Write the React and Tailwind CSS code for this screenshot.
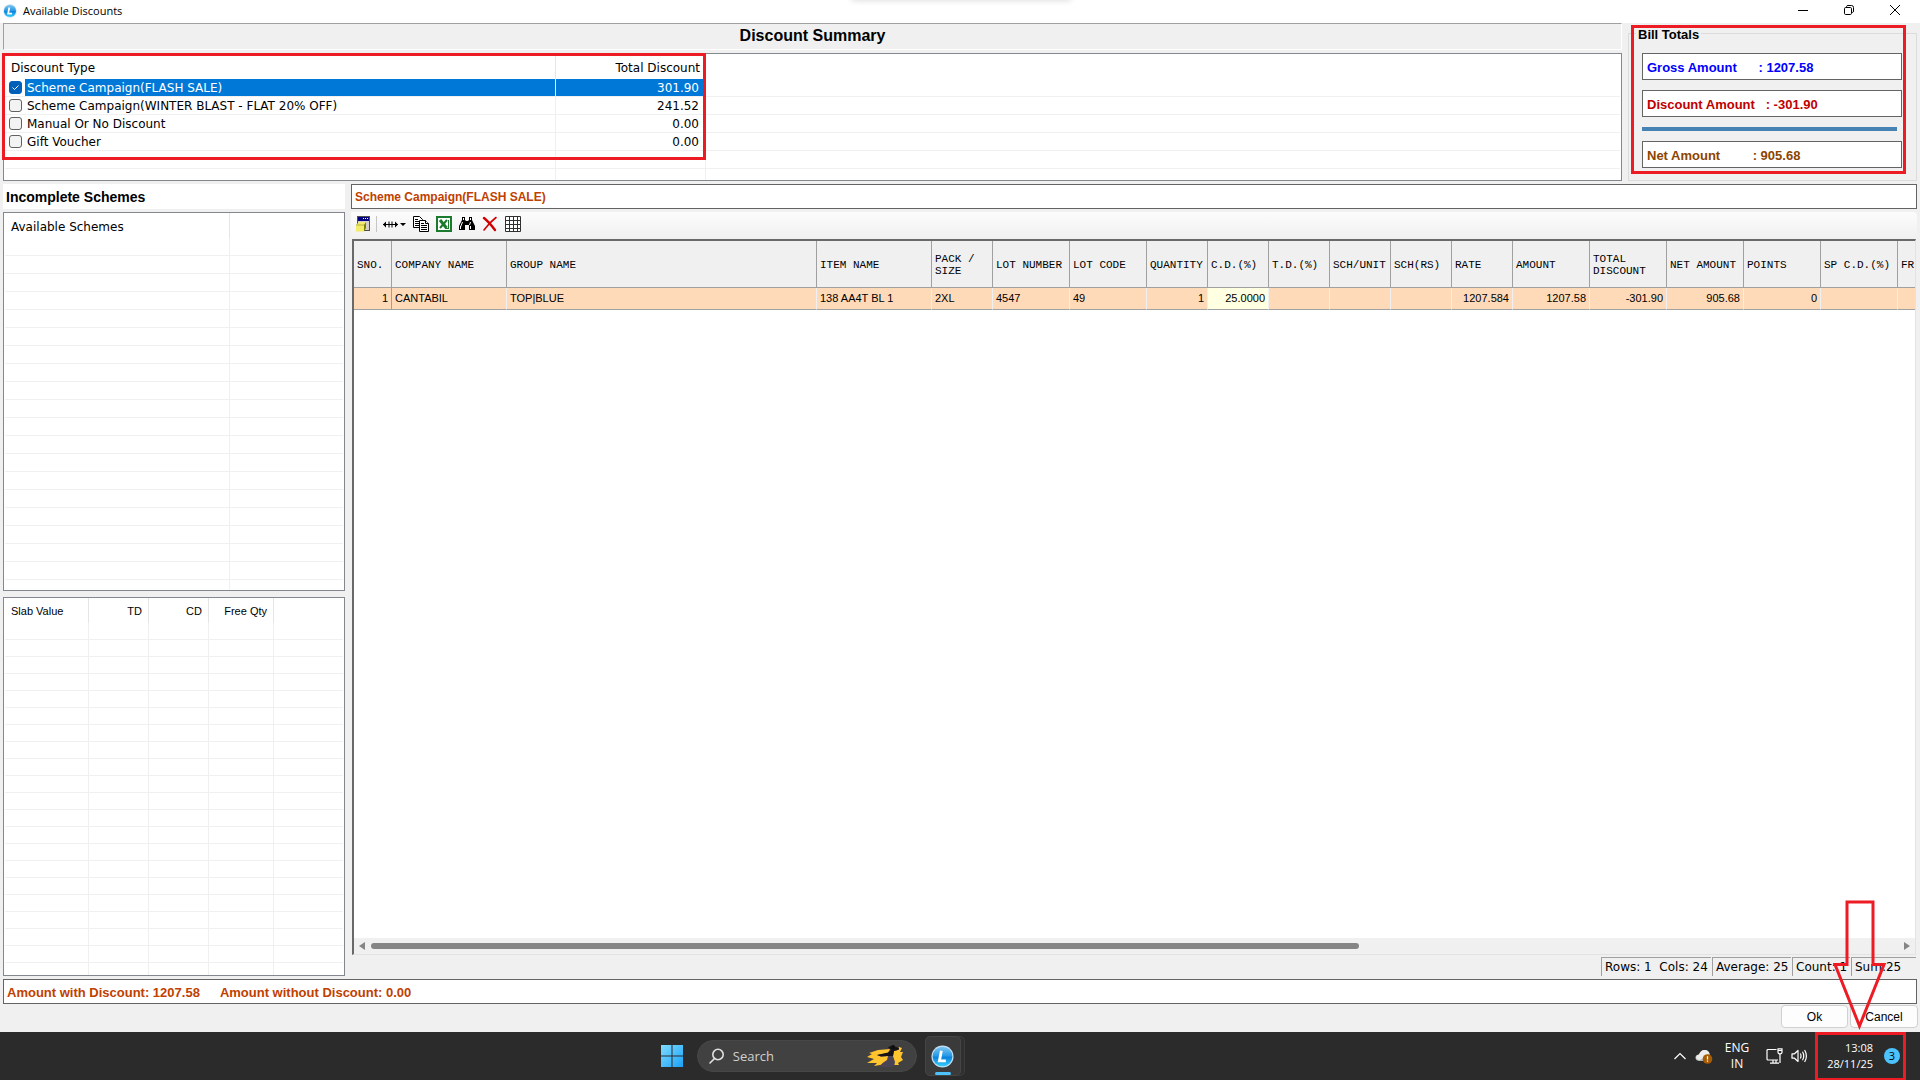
import { useState } from 'react'
import { clsx } from 'clsx'

const UI = "font-['DejaVu_Sans',sans-serif]"
const SANS = "font-['Liberation_Sans',Arial,sans-serif]"
const SEGOE = "font-['Open_Sans',sans-serif]"
const MONO = "font-['Liberation_Mono',monospace]"

const DISCOUNTS = [
  { id: 'flash', label: 'Scheme Campaign(FLASH SALE)', total: '301.90' },
  { id: 'winter', label: 'Scheme Campaign(WINTER BLAST - FLAT 20% OFF)', total: '241.52' },
  { id: 'manual', label: 'Manual Or No Discount', total: '0.00' },
  { id: 'gift', label: 'Gift Voucher', total: '0.00' },
]

const COLUMNS = [
  { title: 'SNO.', value: '1', col: 'w-[38px]', right: true },
  { title: 'COMPANY NAME', value: 'CANTABIL', col: 'w-[115px]' },
  { title: 'GROUP NAME', value: 'TOP|BLUE', col: 'w-[310px]' },
  { title: 'ITEM NAME', value: '138 AA4T BL 1', col: 'w-[115px]' },
  { title: 'PACK / SIZE', value: '2XL', col: 'w-[61px]' },
  { title: 'LOT NUMBER', value: '4547', col: 'w-[77px]' },
  { title: 'LOT CODE', value: '49', col: 'w-[77px]' },
  { title: 'QUANTITY', value: '1', col: 'w-[61px]', right: true },
  { title: 'C.D.(%)', value: '25.0000', col: 'w-[61px]', right: true, editable: true },
  { title: 'T.D.(%)', value: '', col: 'w-[61px]' },
  { title: 'SCH/UNIT', value: '', col: 'w-[61px]' },
  { title: 'SCH(RS)', value: '', col: 'w-[61px]' },
  { title: 'RATE', value: '1207.584', col: 'w-[61px]', right: true },
  { title: 'AMOUNT', value: '1207.58', col: 'w-[77px]', right: true },
  { title: 'TOTAL DISCOUNT', value: '-301.90', col: 'w-[77px]', right: true },
  { title: 'NET AMOUNT', value: '905.68', col: 'w-[77px]', right: true },
  { title: 'POINTS', value: '0', col: 'w-[77px]', right: true },
  { title: 'SP C.D.(%)', value: '', col: 'w-[77px]' },
  { title: 'FR', value: '', col: 'w-auto' },
]

// light grid lines of the empty list rows
const LINE = 'border-r border-b border-[#f0f0f0]'
const LAST = 'border-b border-[#f0f0f0]'
const HEAD = 'border-r border-[#e5e5e5]'

function EmptyRows({ count, cells, height }) {
  return Array.from({ length: count }, (_, i) => (
    <tr key={i} className={height}>
      {Array.from({ length: cells }, (_, j) => (
        <td key={j} className={clsx('p-0', j === cells - 1 ? LAST : LINE)} />
      ))}
    </tr>
  ))
}

function Logo({ className }) {
  return (
    <svg viewBox="0 0 24 24" className={className} aria-hidden="true">
      <defs>
        <linearGradient id="ball" x1="0" y1="0" x2="0" y2="1">
          <stop offset="0" stopColor="#7cc4f2" />
          <stop offset="0.45" stopColor="#2a9be6" />
          <stop offset="0.55" stopColor="#0a84dc" />
          <stop offset="1" stopColor="#35d0ff" />
        </linearGradient>
      </defs>
      <circle cx="12" cy="12" r="11.5" fill="#c4dff0" />
      <circle cx="12" cy="12" r="10.3" fill="url(#ball)" />
      <path d="M10.8 6L8.800 16.500H15.500" fill="none" stroke="#fff" strokeWidth="3" />
    </svg>
  )
}

function TitleBar() {
  return (
    <header className="relative flex h-[23px] shrink-0 items-center bg-white pr-[2px] pb-px pl-[3px]">
      <div className="pointer-events-none absolute -top-1 left-[44.3%] h-1 w-[220px] rounded-full shadow-[0_0_6px_rgba(0,0,0,0.2)]" />
      <Logo className="size-[14px]" />
      <h1 className={`ml-[6px] text-[11px] leading-4 text-black ${SEGOE}`}>Available Discounts</h1>
      <div className="ml-auto flex h-full items-start">
        <button type="button" aria-label="Minimize" className="flex h-5 w-[46px] items-center justify-center">
          <svg viewBox="0 0 10 10" className="size-[10px]" fill="none" stroke="#000">
            <path d="M0 5.5H10" />
          </svg>
        </button>
        <button type="button" aria-label="Restore" className="flex h-5 w-[45px] items-center justify-center">
          <svg viewBox="0 0 10 10" className="size-[10px]" fill="none" stroke="#000">
            <rect x="0.5" y="2.5" width="7" height="7" rx="1.2" />
            <path d="M2.5 2.2V1.5Q2.8 .5 4 .5H7.5Q9.5 .5 9.5 2.5V6Q9.5 7.2 8.5 7.5H8" />
          </svg>
        </button>
        <button type="button" aria-label="Close" className="flex h-5 w-[47px] items-center justify-center">
          <svg viewBox="0 0 10 10" className="size-[10px]" fill="none" stroke="#000">
            <path d="M0 0L10 10M10 0L0 10" />
          </svg>
        </button>
      </div>
    </header>
  )
}

function DiscountList() {
  const [checked, setChecked] = useState('flash')
  return (
    <div className="relative h-[128px]">
      <div className="h-full overflow-hidden border border-[#828790] bg-white px-px">
        <table className={`w-full table-fixed border-separate border-spacing-0 text-[12px] leading-4 text-black ${UI}`}>
          <colgroup>
            <col className="w-[551px]" />
            <col className="w-[150px]" />
            <col />
          </colgroup>
          <thead>
            <tr className="h-[25px]">
              <th className={`${HEAD} p-0 pt-[2px] pl-[6px] text-left font-normal`}>Discount Type</th>
              <th className="p-0 pt-[2px] pr-[6px] text-right font-normal">Total Discount</th>
              <th className="p-0" />
            </tr>
          </thead>
          <tbody>
            {DISCOUNTS.map((d) => {
              const on = checked === d.id
              return (
                <tr key={d.id} className="h-[18px]">
                  <td className={`${LINE} p-0`}>
                    <label className="flex h-[17px] items-center pl-1">
                      <span className="relative mr-[3px] flex size-[13px]">
                        <input
                          type="checkbox"
                          checked={on}
                          onChange={() => setChecked(d.id)}
                          className="size-[13px] appearance-none rounded-[3px] border border-[#626262] bg-[#f3f3f3] checked:border-[#005fb8] checked:bg-[#005fb8]"
                        />
                        {on && (
                          <svg viewBox="0 0 13 13" className="pointer-events-none absolute inset-0" fill="none" stroke="#fff">
                            <path d="M3.5 6.5L5.5 8.5L9.5 4.500" />
                          </svg>
                        )}
                      </span>
                      <span
                        className={clsx(
                          'h-full flex-1 pt-px pl-[2px] whitespace-pre',
                          on && 'bg-[#0078d7] text-white',
                        )}
                      >
                        {d.label}
                      </span>
                    </label>
                  </td>
                  <td className={clsx(LINE, 'p-0 pt-px pr-[6px] text-right', on && 'bg-[#0078d7] text-white')}>{d.total}</td>
                  <td className={`${LAST} p-0`} />
                </tr>
              )
            })}
            <EmptyRows count={3} cells={3} height="h-[18px]" />
          </tbody>
        </table>
      </div>
      <div className="pointer-events-none absolute top-0 -left-px h-[107px] w-[704px] border-3 border-[#ed1c24]" />
    </div>
  )
}

function TotalBox({ text, className }) {
  return (
    <p className={clsx('flex h-[27px] items-center border border-[#646464] bg-white pt-[2px] pl-1 whitespace-pre', className)}>
      {text}
    </p>
  )
}

function BillTotals() {
  return (
    <section className={`relative w-[289px] shrink-0 pt-[10px] text-[13px] leading-4 font-bold ${SANS}`}>
      <div className="h-[148px] border border-[#dcdcdc] pr-[14px] pl-[13px]">
        <h2 className="-mt-[7px] -ml-[6px] w-max bg-[#f0f0f0] px-[2px] text-black">Bill Totals</h2>
        <TotalBox text={'Gross Amount      : 1207.58'} className="mt-[10px] text-[#0000ff]" />
        <TotalBox text={'Discount Amount   : -301.90'} className="mt-[10px] text-[#c00000]" />
        <div className="mt-[10px] mr-[5px] h-1 bg-[#4682b4]" />
        <TotalBox text={'Net Amount         : 905.68'} className="mt-[10px] text-[#8b4500]" />
      </div>
      <div className="pointer-events-none absolute top-[2px] right-[11px] left-[3px] h-[149px] border-3 border-[#ed1c24]" />
    </section>
  )
}

function SchemesList() {
  return (
    <div className="min-h-0 flex-1 overflow-hidden border border-[#828790] bg-white px-px">
      <table className={`w-full table-fixed border-separate border-spacing-0 text-[12px] leading-4 text-black ${UI}`}>
        <colgroup>
          <col className="w-[225px]" />
          <col />
        </colgroup>
        <thead>
          <tr className="h-[25px]">
            <th className={`${HEAD} p-0 pt-[2px] pl-[6px] text-left font-normal`}>Available Schemes</th>
            <th className="p-0" />
          </tr>
        </thead>
        <tbody>
          <EmptyRows count={20} cells={2} height="h-[18px]" />
        </tbody>
      </table>
    </div>
  )
}

function SlabList() {
  return (
    <div className="min-h-0 flex-1 overflow-hidden border border-[#828790] bg-white px-px">
      <table className={`w-full table-fixed border-separate border-spacing-0 text-[11px] leading-4 text-black ${SANS}`}>
        <colgroup>
          <col className="w-[84px]" />
          <col className="w-[60px]" />
          <col className="w-[60px]" />
          <col className="w-[65px]" />
          <col />
        </colgroup>
        <thead>
          <tr className="h-[25px]">
            <th className={`${HEAD} p-0 pl-[6px] text-left font-normal`}>Slab Value</th>
            <th className={`${HEAD} p-0 pr-[6px] text-right font-normal`}>TD</th>
            <th className={`${HEAD} p-0 pr-[6px] text-right font-normal`}>CD</th>
            <th className={`${HEAD} p-0 pr-[6px] text-right font-normal`}>Free Qty</th>
            <th className="p-0" />
          </tr>
        </thead>
        <tbody>
          <EmptyRows count={22} cells={5} height="h-[17px]" />
        </tbody>
      </table>
    </div>
  )
}

function Toolbar() {
  const btn = 'flex h-5 w-[23px] items-center justify-center'
  return (
    <div className="mt-[3px] flex h-[27px] shrink-0 items-center rounded-r bg-linear-to-b from-[#fcfcfc] to-[#f0f0f0] pb-[3px]">
      <button type="button" aria-label="Properties" className={btn}>
        <svg viewBox="0 0 16 16" className="size-4">
          <rect x="2.5" y="0.5" width="12" height="14" fill="#d4d0c8" stroke="#505050" />
          <rect x="3" y="1" width="11" height="4" fill="#000080" />
          <path d="M8 2.5h1M10 2.5h1M12 2.5h1" stroke="#fff" />
          <path d="M1 9L4 6H11L9 9V15.500H1Z" fill="#f2ec6a" />
          <path d="M9 9L11 6V12L9 15.500Z" fill="#808000" />
          <path d="M1 9H9" stroke="#b8b040" />
        </svg>
      </button>
      <span className="mx-[2px] h-4 w-px bg-[#c5c5c5]" />
      <button type="button" aria-label="Column width" className="flex h-5 w-[30px] items-center justify-center">
        <svg viewBox="0 0 24 16" className="h-4 w-6">
          <path d="M1 8.5H16M7 5.500V11.500M10 5.500V11.500" stroke="#000" />
          <path d="M1 8.5L4 5.500V11.500ZM16 8.500L13 5.500V11.500ZM18 7H24L21 10Z" fill="#000" />
        </svg>
      </button>
      <button type="button" aria-label="Copy" className={btn}>
        <svg viewBox="0 0 16 16" className="size-4" fill="#fff" stroke="#000">
          <path d="M0.5 0.5H6.500L9.500 3.500V11.500H0.500Z" />
          <path d="M2 3.5H5M2 5.500H6M2 7.500H6M2 9.500H6" />
          <path d="M6.5 4.5H12.500L15.500 7.500V15.500H6.500Z" />
          <path d="M12.5 4.5V7.500H15.500M8 7.500H11M8 9.500H14M8 11.500H14M8 13.500H14" />
        </svg>
      </button>
      <button type="button" aria-label="Export to Excel" className={btn}>
        <svg viewBox="0 0 16 16" className="size-4">
          <rect x="1" y="1" width="14" height="14" fill="#fff" stroke="#1c7a2c" strokeWidth="2" />
          <path d="M4 4L10.5 12" stroke="#1c7a2c" strokeWidth="3" />
          <path d="M11 4L4 12" stroke="#1c7a2c" strokeWidth="2" />
          <path d="M12.5 4V13M9 12.500H13" stroke="#1c7a2c" />
        </svg>
      </button>
      <button type="button" aria-label="Find" className={btn}>
        <svg viewBox="0 0 16 16" className="size-4">
          <path d="M3 1H6V4L7 5H9L10 4V1H13V4L16 10V14H10V9H6V14H0V10L3 4Z" fill="#000" />
          <path d="M4.5 2V4M11.500 2V4M3.500 6L1.500 11M11.500 6L10.500 9M11.500 10V13M1.500 10V13" stroke="#fff" />
        </svg>
      </button>
      <button type="button" aria-label="Delete" className={btn}>
        <svg viewBox="0 0 16 16" className="size-4" fill="none" stroke="#d00000" strokeLinecap="round">
          <path d="M2 2Q7 6 13 14" strokeWidth="2.4" />
          <path d="M14 1.5Q8 6 2 14" strokeWidth="1.6" />
        </svg>
      </button>
      <button type="button" aria-label="Grid" className={btn}>
        <svg viewBox="0 0 16 16" className="size-4" fill="#fff" stroke="#303030">
          <path d="M0.5 0.5H15.500V15.500H0.500Z" />
          <path d="M4.5 0V16M8.500 0V16M12.500 0V16M0 4.500H16M0 8.500H16M0 12.500H16" />
        </svg>
      </button>
    </div>
  )
}

function ItemGrid() {
  const last = COLUMNS.length - 1
  return (
    <div className="mx-px flex min-h-0 flex-1 flex-col border-t-2 border-r border-b border-l-2 border-t-[#696969] border-r-[#e3e3e3] border-b-[#e3e3e3] border-l-[#696969] bg-white">
      <div className="min-h-0 flex-1 overflow-hidden">
        <table className="w-full table-fixed border-separate border-spacing-0 text-black">
          <colgroup>
            {COLUMNS.map((c) => (
              <col key={c.title} className={c.col} />
            ))}
          </colgroup>
          <thead>
            <tr className="h-[47px] bg-[#f0f0f0]">
              {COLUMNS.map((c, i) => (
                <th
                  key={c.title}
                  className={clsx(
                    'border-b border-[#a0a0a0] p-0 pt-[2px] pl-[3px] text-left text-[11px] leading-3 font-normal',
                    i < last && 'border-r',
                    MONO,
                  )}
                >
                  {c.title}
                </th>
              ))}
            </tr>
          </thead>
          <tbody>
            <tr className="h-[22px]">
              {COLUMNS.map((c, i) => (
                <td
                  key={c.title}
                  className={clsx(
                    'border-b border-b-[#a0a0a0] px-[3px] pt-0 pb-px text-[11px] leading-4 whitespace-nowrap',
                    SANS,
                    i < last && 'border-r',
                    i === 0 ? 'border-r-[#a0a0a0]' : 'border-r-[#f0f0f0]',
                    c.right && 'text-right',
                    c.editable ? 'bg-[#ffffe1]' : 'bg-[#ffdab9]',
                  )}
                >
                  {c.value}
                </td>
              ))}
            </tr>
          </tbody>
        </table>
      </div>
      <div className="flex h-4 shrink-0 items-center bg-[#f0f0f0] px-[5px]">
        <svg viewBox="0 0 6 8" className="h-2 w-[6px]" fill="#858585">
          <path d="M6 0V8L0 4Z" />
        </svg>
        <div className="mx-[6px] flex-1">
          <div className="h-[6px] w-[64.7%] rounded-full bg-[#858585]" />
        </div>
        <svg viewBox="0 0 6 8" className="h-2 w-[6px]" fill="#858585">
          <path d="M0 0V8L6 4Z" />
        </svg>
      </div>
    </div>
  )
}

function StatusBar() {
  const cell = 'h-[19px] border-t border-l border-[#a0a0a0] pt-px pl-[3px] whitespace-pre'
  return (
    <div className={`flex h-[21px] shrink-0 items-start justify-end gap-px pt-[2px] pr-px text-[12px] leading-4 text-black ${UI}`}>
      <span className={`${cell} w-[110px]`}>{'Rows: 1  Cols: 24'}</span>
      <span className={`${cell} w-[79px]`}>Average: 25</span>
      <span className={`${cell} w-[58px]`}>Count: 1</span>
      <span className={`${cell} w-[65px]`}>Sum:25</span>
    </div>
  )
}

function Taskbar() {
  return (
    <footer className={`flex h-12 shrink-0 items-center bg-[#2b2b2b] text-white ${SEGOE}`}>
      <div className="ml-[34%] flex items-center pl-[7px]">
        <button type="button" aria-label="Start" className="mr-[13px]">
          <svg viewBox="0 0 24 24" className="size-6">
            <defs>
              <linearGradient id="win" x1="0" y1="0" x2="1" y2="1">
                <stop offset="0" stopColor="#7fdcff" />
                <stop offset="1" stopColor="#1ba1f8" />
              </linearGradient>
            </defs>
            <path d="M1 1H11.5V11.500H1ZM12.500 1H23V11.500H12.500ZM1 12.500H11.500V23H1ZM12.500 12.500H23V23H12.500Z" fill="url(#win)" />
          </svg>
        </button>
        <label className="flex h-8 w-[220px] items-center rounded-full border border-[#474747] bg-[#414141] pr-3 pl-[11px]">
          <svg viewBox="0 0 16 16" className="size-4 shrink-0" fill="none" stroke="#e0e0e0" strokeWidth="1.6">
            <circle cx="9" cy="6.5" r="5.2" />
            <path d="M5.5 10.5L1 15" strokeLinecap="round" />
          </svg>
          <input
            type="search"
            aria-label="Search"
            placeholder="Search"
            className="ml-2 w-full min-w-0 bg-transparent text-[13px] leading-5 placeholder:text-[#d0d0d0] focus:outline-none"
          />
          <svg viewBox="0 0 38 24" className="h-6 w-[38px] shrink-0">
            <path
              d="M1 13L6 10L3 9L12 6L24 5L33 3L36 4L34 8L37 8L35 13L37 16L32 19L33 21L27 21L20 20L8 22L11 19L1 19L8 15Z"
              fill="#ffc42e"
            />
            <path d="M24 5L33 4L32 6L28 7L27 12L29 18L28 23H13Q17 18 21 16L22 12L15 12.500L11 11L22 9Z" fill="#4a4356" />
            <path d="M22 3L25 2L26 4H29L28 2.500L33 3.500L33 5.500L28 7L27 12H22L15 12.500L11 11L22 8.500L25 6Z" fill="#151317" />
            <circle cx="27" cy="3" r="2" fill="#0d0d0d" />
          </svg>
        </label>
        <div className="ml-2 flex h-10 w-10 rounded-[5px] border border-[#3c3c3c] bg-[#303030]">
          <button
            type="button"
            aria-label="Available Discounts"
            className="relative -m-px flex w-[36px] shrink-0 items-center justify-center rounded-[5px] border border-[#454545] bg-[#3a3a3a] pr-0"
          >
            <Logo className="size-[23px]" />
            <span className="absolute bottom-0 h-[3px] w-4 rounded-full bg-[#4cc2ff]" />
          </button>
        </div>
      </div>
      <div className="flex h-full flex-1 items-center justify-end text-[11px] leading-4">
        <button type="button" aria-label="Show hidden icons">
          <svg viewBox="0 0 14 14" className="size-[14px]" fill="none" stroke="#fff" strokeWidth="1.2">
            <path d="M1.5 10L7 4.500L12.500 10" />
          </svg>
        </button>
        <button type="button" aria-label="OneDrive" className="ml-2">
          <svg viewBox="0 0 18 16" className="h-4 w-[18px]">
            <path d="M4 13Q0 12.5 .5 9Q1 6.500 4 6.500Q6 1.500 10 2Q14 2 15 7V13Z" fill="#b5b5b5" />
            <path d="M4 6.5Q6 1.500 10 2Q13.500 2.300 14.500 6L5 12Q1 12 1 9Q1.500 6.500 4 6.500Z" fill="#ececec" />
            <circle cx="12.500" cy="11" r="4.800" fill="#a85b00" />
            <path d="M12.5 8.200V11.600M12.500 12.600V13.800" stroke="#fff" strokeWidth="1.3" />
          </svg>
        </button>
        <button type="button" className="ml-[9px] w-[30px] text-center text-[12px]">
          ENG
          <br />
          IN
        </button>
        <button type="button" aria-label="Network and volume" className="ml-[14px] flex items-center gap-2">
          <svg viewBox="0 0 17 16" className="h-4 w-[17px]" fill="none" stroke="#fff" strokeWidth="1.2">
            <path d="M10.5 1.500H2Q1 1.500 1 2.500V11Q1 12 2 12H12M7 12V15M10 12V15M4 15.200H13M14 6V15" />
            <path d="M12 .8H16V4.500Q16 5.800 14 5.800Q12 5.800 12 4.500ZM12 2.500H16" />
          </svg>
          <svg viewBox="0 0 17 16" className="h-4 w-[17px]" fill="none" stroke="#fff" strokeWidth="1.2">
            <path d="M1 5.800H3.500L7 2.500V13.500L3.500 10.200H1Z" strokeLinejoin="round" />
            <path d="M9.3 5.500Q10.800 8 9.300 10.500M11.500 3.800Q14 8 11.500 12.200M13.600 2Q17.200 8 13.600 14" />
          </svg>
        </button>
        <button
          type="button"
          className="relative mr-[14px] ml-[7px] flex h-[49px] w-[91px] items-center justify-end gap-[11px] border-3 border-[#ed1c24] pr-[3px] text-right"
        >
          <span>
            13:08
            <br />
            28/11/25
          </span>
          <span className="flex size-4 items-center justify-center rounded-full bg-[#4cc2ff] text-black">3</span>
        </button>
      </div>
    </footer>
  )
}

export default function App() {
  return (
    <div className="flex h-screen min-h-[640px] flex-col overflow-hidden bg-[#f0f0f0]">
      <TitleBar />

      <div className="flex shrink-0 gap-[6px] px-[3px]">
        <div className="min-w-0 flex-1">
          <h2
            className={`mb-[3px] flex h-[27px] items-center justify-center border border-t-[#a0a0a0] border-r-white border-b-white border-l-[#a0a0a0] pb-px text-[16px] leading-5 font-bold text-black ${SANS}`}
          >
            Discount Summary
          </h2>
          <DiscountList />
        </div>
        <BillTotals />
      </div>

      <main className="mt-[3px] flex min-h-0 flex-1 gap-[6px] px-[3px]">
        <aside className="flex w-[342px] shrink-0 flex-col gap-[6px]">
          <h2 className={`-mb-[3px] flex h-[25px] shrink-0 items-center bg-white pl-[3px] text-[14px] leading-5 font-bold text-black ${SANS}`}>
            Incomplete Schemes
          </h2>
          <SchemesList />
          <SlabList />
        </aside>
        <section className="flex min-w-0 flex-1 flex-col">
          <h2 className={`flex h-[25px] shrink-0 items-center border border-[#646464] bg-white pl-[3px] text-[12px] leading-5 font-bold text-[#c04000] ${SANS}`}>
            Scheme Campaign(FLASH SALE)
          </h2>
          <Toolbar />
          <ItemGrid />
          <StatusBar />
        </section>
      </main>

      <div className="relative shrink-0 px-[3px] pt-[3px]">
        <p
          className={`flex h-[25px] items-center gap-5 border border-[#646464] bg-white pt-[2px] pl-[3px] text-[13px] leading-5 font-bold text-[#c04000] ${SANS}`}
        >
          <span>Amount with Discount: 1207.58</span>
          <span>Amount without Discount: 0.00</span>
        </p>
        <div className={`-mr-px flex justify-end gap-[2px] pt-px pb-1 text-[12px] leading-4 text-black ${SANS}`}>
          <button type="button" className="h-[23px] w-[67px] rounded border border-[#d0d0d0] bg-[#fdfdfd]">
            Ok
          </button>
          <button type="button" className="h-[23px] w-[68px] rounded border border-[#d0d0d0] bg-[#fdfdfd]">
            Cancel
          </button>
        </div>
        <svg
          viewBox="0 0 54 130"
          className="pointer-events-none absolute right-[33px] bottom-[2px] h-[130px] w-[54px]"
          fill="none"
          stroke="#ed1c24"
          strokeWidth="3"
        >
          <path d="M14 2H40V64.500H51L26.500 126L2 64.500H14Z" />
        </svg>
      </div>

      <Taskbar />
    </div>
  )
}
